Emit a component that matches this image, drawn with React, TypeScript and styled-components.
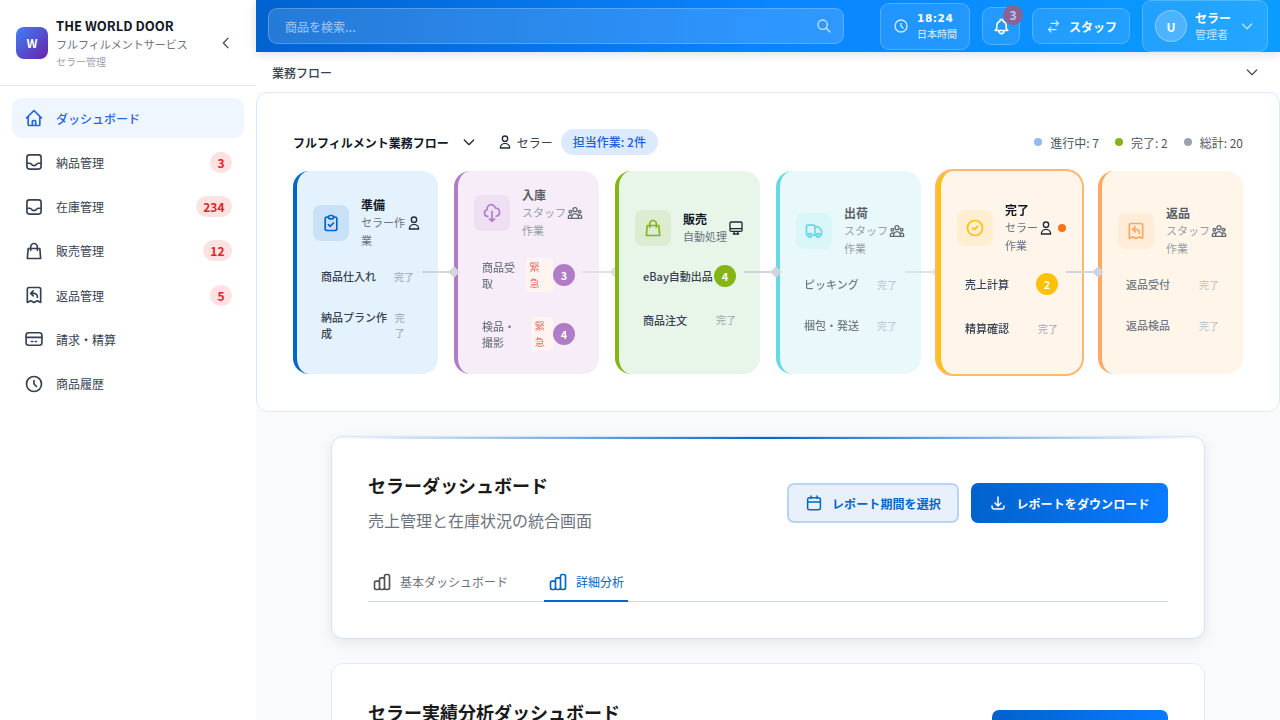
import { ReactNode } from 'react';
import {
  HiOutlineBell,
  HiOutlineChartBar,
  HiOutlineCheckCircle,
  HiOutlineChevronDown,
  HiOutlineChevronLeft,
  HiOutlineClipboardCheck,
  HiOutlineClock,
  HiOutlineCloudDownload,
  HiOutlineDesktopComputer,
  HiOutlineDownload,
  HiOutlineHome,
  HiOutlineReceiptRefund,
  HiOutlineSearch,
  HiOutlineShoppingBag,
  HiOutlineSwitchHorizontal,
  HiOutlineTruck,
  HiOutlineUser,
  HiOutlineUserGroup,
} from 'react-icons/hi';
import styled, { createGlobalStyle } from 'styled-components';

const GlobalStyle = createGlobalStyle`
  * {
    box-sizing: border-box;
  }
  html,
  body {
    margin: 0;
    padding: 0;
    background: #f8fafc;
    font-family: 'Noto Sans CJK JP', 'Noto Sans', sans-serif;
  }
  p,
  h1,
  h2 {
    margin: 0;
  }
`;

const Page = styled.div`
  display: flex;
  width: 1280px;
  height: 720px;
  overflow: hidden;
`;

const Sidebar = styled.aside`
  width: 256px;
  flex-shrink: 0;
  background: #fff;
`;

const Brand = styled.div`
  display: flex;
  align-items: center;
  height: 86px;
  padding: 0 16px;
  gap: 8px;
  border-bottom: 1px solid #e5e7eb;
`;

const Logo = styled.div`
  width: 32px;
  height: 32px;
  border-radius: 8px;
  display: flex;
  align-items: center;
  justify-content: center;
  background: linear-gradient(135deg, #3b82f6, #6b21a8);
  color: #fff;
  font-size: 12px;
  font-weight: 700;
`;

const BrandText = styled.div`
  flex: 1;
  display: flex;
  flex-direction: column;
  h1 {
    font-size: 13px;
    line-height: 20px;
    font-weight: 700;
    color: #111827;
  }
  p {
    font-size: 11px;
    line-height: 16px;
    color: #6b7280;
  }
  span {
    margin-top: 2px;
    font-size: 10px;
    line-height: 16px;
    color: #9ca3af;
  }
`;

const Collapse = styled.div`
  display: flex;
  color: #4b5563;
  margin-right: 6px;
  font-size: 16px;
`;

const Nav = styled.nav`
  display: flex;
  flex-direction: column;
  gap: 4.3px;
  padding: 12px;
`;

const NavItem = styled.div<{ $active?: boolean }>`
  display: flex;
  align-items: center;
  height: 40px;
  padding: 0 12px;
  gap: 12px;
  border-radius: 10px;
  font-size: 12px;
  font-weight: ${(p) => (p.$active ? 500 : 400)};
  color: ${(p) => (p.$active ? '#2563eb' : '#374151')};
  background: ${(p) => (p.$active ? '#eff6ff' : 'transparent')};
  svg {
    width: 20px;
    height: 20px;
    flex-shrink: 0;
    color: ${(p) => (p.$active ? '#2563eb' : '#374151')};
  }
  span {
    flex: 1;
  }
`;

const NavBadge = styled.b`
  min-width: 22px;
  height: 21px;
  padding: 0 7.5px;
  border-radius: 11px;
  background: #fee2e2;
  color: #dc2626;
  font-size: 12px;
  line-height: 21px;
  font-weight: 700;
  text-align: center;
`;

const Main = styled.div`
  flex: 1;
  min-width: 0;
  display: flex;
  flex-direction: column;
`;

const Header = styled.header`
  position: relative;
  z-index: 3;
  display: flex;
  align-items: center;
  height: 52px;
  flex-shrink: 0;
  padding: 0 12px;
  gap: 12px;
  background: linear-gradient(90deg, #0062cf, #0a84ff 50%, #0a9dff);
  box-shadow: 0 2px 10px rgba(15, 23, 42, 0.14);
  color: #fff;
`;

const SearchBox = styled.div`
  display: flex;
  align-items: center;
  justify-content: space-between;
  width: 576px;
  height: 36px;
  margin-right: 24px;
  padding: 0 11px 0 16px;
  border-radius: 9px;
  border: 1px solid rgba(255, 255, 255, 0.22);
  background: rgba(255, 255, 255, 0.15);
  font-size: 12px;
  font-weight: 500;
  color: rgba(255, 255, 255, 0.5);
  svg {
    width: 16px;
    height: 16px;
    color: rgba(255, 255, 255, 0.75);
  }
`;

const Glass = styled.div`
  position: relative;
  display: flex;
  align-items: center;
  border-radius: 9px;
  border: 1px solid rgba(255, 255, 255, 0.22);
  background: rgba(255, 255, 255, 0.1);
`;

const TimeBox = styled(Glass)`
  width: 90px;
  height: 47px;
  padding-left: 12px;
  gap: 8px;
  svg {
    width: 16px;
    height: 16px;
    color: rgba(255, 255, 255, 0.8);
  }
  b {
    display: block;
    font-family: 'DejaVu Sans', sans-serif;
    font-size: 10.5px;
    line-height: 16px;
    font-weight: 700;
    letter-spacing: 0.6px;
  }
  small {
    display: block;
    font-size: 10px;
    line-height: 16px;
    font-weight: 500;
    color: rgba(255, 255, 255, 0.75);
  }
`;

const BellBox = styled(Glass)`
  width: 38px;
  height: 38px;
  justify-content: center;
  svg {
    width: 19px;
    height: 19px;
  }
`;

const BellCount = styled.span`
  position: absolute;
  top: -3px;
  right: -4px;
  width: 20px;
  height: 20px;
  border-radius: 50%;
  background: #8a6396;
  color: #b7c6ea;
  font-size: 12px;
  line-height: 20px;
  font-weight: 700;
  text-align: center;
`;

const StaffBox = styled(Glass)`
  width: 98px;
  height: 36px;
  padding-left: 13px;
  gap: 8px;
  font-size: 12px;
  font-weight: 700;
  svg {
    width: 15px;
    height: 15px;
    color: rgba(255, 255, 255, 0.8);
  }
`;

const UserBox = styled(Glass)`
  width: 126px;
  height: 52px;
  padding-left: 12px;
  gap: 8px;
  > svg {
    width: 16px;
    height: 16px;
    color: rgba(255, 255, 255, 0.7);
  }
`;

const Avatar = styled.div`
  width: 32px;
  height: 32px;
  border-radius: 50%;
  display: flex;
  align-items: center;
  justify-content: center;
  background: rgba(255, 255, 255, 0.2);
  border: 1px solid rgba(255, 255, 255, 0.3);
  font-size: 12px;
  font-weight: 700;
`;

const UserText = styled.div`
  width: 36px;
  b {
    display: block;
    font-size: 12px;
    line-height: 17px;
    font-weight: 700;
  }
  small {
    display: block;
    font-size: 11px;
    line-height: 17px;
    color: rgba(255, 255, 255, 0.72);
  }
`;

const FlowBar = styled.div`
  display: flex;
  align-items: center;
  justify-content: space-between;
  height: 40px;
  flex-shrink: 0;
  padding: 0 20px 0 16px;
  background: #fff;
  font-size: 12px;
  font-weight: 500;
  color: #374151;
  svg {
    width: 16px;
    height: 16px;
    color: #4b5563;
  }
`;

const FlowPanel = styled.section`
  flex-shrink: 0;
  height: 320px;
  padding: 36px;
  background: #fff;
  border: 1px solid #dbeafe;
  border-radius: 12px;
`;

const FlowHead = styled.div`
  display: flex;
  align-items: center;
  justify-content: space-between;
  height: 26px;
  margin-bottom: 16px;
`;

const FlowHeadLeft = styled.div`
  display: flex;
  align-items: center;
  font-size: 12px;
  color: #374151;
  b {
    color: #111827;
    font-weight: 700;
  }
`;

const HeadIcon = styled.span<{ $gap: number }>`
  display: flex;
  margin: 0 ${(p) => p.$gap}px 0 12px;
  color: #1f2937;
  svg {
    width: 16px;
    height: 16px;
  }
`;

const Pill = styled.span`
  height: 26px;
  margin-left: 8px;
  padding: 0 12px;
  border-radius: 13px;
  background: #dbeafe;
  color: #1d5fd8;
  font-weight: 500;
  line-height: 26px;
`;

const Legend = styled.div`
  display: flex;
  gap: 16px;
  font-size: 12px;
  color: #4b5563;
`;

const LegendItem = styled.span<{ $color: string }>`
  display: flex;
  align-items: center;
  gap: 8px;
  &::before {
    content: '';
    width: 8px;
    height: 8px;
    border-radius: 50%;
    background: ${(p) => p.$color};
  }
`;

const Steps = styled.div`
  display: grid;
  grid-template-columns: repeat(6, 145px);
  gap: 16px;
`;

const Step = styled.div<{ $accent: string; $bg: string; $dim?: boolean; $current?: boolean }>`
  position: relative;
  display: flex;
  flex-direction: column;
  justify-content: center;
  height: 203px;
  padding: 16px;
  border-radius: 16px;
  border-left: 4px solid ${(p) => p.$accent};
  background: ${(p) => p.$bg};
  opacity: ${(p) => (p.$dim ? 0.7 : 1)};
  box-shadow: ${(p) => (p.$current ? '0 0 0 2px #ffb870' : 'none')};
`;

const StepHead = styled.div`
  display: flex;
  align-items: center;
  margin-bottom: 11px;
`;

const StepIcon = styled.div<{ $accent: string }>`
  width: 36px;
  height: 36px;
  flex-shrink: 0;
  margin-right: 12px;
  border-radius: 8px;
  display: flex;
  align-items: center;
  justify-content: center;
  background: ${(p) => p.$accent}1e;
  color: ${(p) => p.$accent};
  svg {
    width: 20px;
    height: 20px;
  }
`;

const StepText = styled.div`
  flex: 1;
  min-width: 0;
  b {
    display: block;
    font-size: 12px;
    line-height: 17px;
    font-weight: 700;
    color: #111827;
  }
  small {
    display: block;
    font-size: 11px;
    line-height: 18px;
    color: #6b7280;
  }
`;

const Role = styled.div`
  display: flex;
  align-items: center;
  flex-shrink: 0;
  gap: 4px;
  color: #1f2937;
  svg {
    width: 16px;
    height: 16px;
  }
`;

const LiveDot = styled.i`
  width: 8px;
  height: 8px;
  border-radius: 50%;
  background: #f97316;
`;

const Tasks = styled.div`
  display: flex;
  flex-direction: column;
  gap: 9px;
`;

const Task = styled.div`
  display: flex;
  align-items: center;
  justify-content: space-between;
  padding: 8px;
`;

const TaskName = styled.span`
  font-size: 11px;
  line-height: 16px;
  font-weight: 500;
  color: #374151;
`;

const Done = styled.span`
  font-size: 10px;
  line-height: 15px;
  color: #9ca3af;
`;

const TaskSide = styled.div`
  display: flex;
  align-items: center;
`;

const Urgent = styled.span`
  padding: 1px 4px;
  border-radius: 4px;
  background: #fff0ea;
  color: #dc2626;
  font-size: 10px;
  line-height: 16px;
`;

const Count = styled.span<{ $accent: string }>`
  width: 22px;
  height: 22px;
  flex-shrink: 0;
  border-radius: 50%;
  background: ${(p) => p.$accent};
  color: #fff;
  font-size: 11px;
  line-height: 22px;
  font-weight: 700;
  text-align: center;
`;

const Connector = styled.div`
  position: absolute;
  z-index: 2;
  top: 100px;
  right: -16px;
  width: 32px;
  height: 2px;
  background: #d1d5db;
  &::after {
    content: '';
    position: absolute;
    top: -3px;
    right: -4px;
    width: 8px;
    height: 8px;
    background: #d1d5db;
    transform: rotate(45deg);
  }
`;

const Content = styled.div`
  display: flex;
  flex-direction: column;
  flex-shrink: 0;
  gap: 24px;
  padding: 24px 75px;
`;

const Card = styled.section<{ $bar?: boolean }>`
  position: relative;
  padding: 36px;
  background: #fff;
  border: 1px solid ${(p) => (p.$bar ? '#d4e4f7' : '#e2ebf8')};
  border-radius: 12px;
  overflow: hidden;
  box-shadow: ${(p) => (p.$bar ? '0 4px 14px rgba(15, 23, 42, 0.08)' : 'none')};
  &::before {
    content: '';
    display: ${(p) => (p.$bar ? 'block' : 'none')};
    position: absolute;
    top: 0;
    left: 0;
    right: 0;
    height: 2px;
    background: linear-gradient(90deg, transparent, #0066cc, transparent);
  }
`;

const CardHead = styled.div`
  display: flex;
  align-items: center;
  justify-content: space-between;
  min-height: 60px;
`;

const CardTitles = styled.div`
  align-self: flex-start;
  h2 {
    font-size: 18px;
    line-height: 24px;
    font-weight: 700;
    color: #1a1a1a;
  }
  p {
    margin: 11px 0 1px;
    font-size: 16px;
    line-height: 24px;
    color: #6b7280;
  }
`;

const Actions = styled.div`
  display: flex;
  gap: 12px;
`;

const Button = styled.div<{ $primary?: boolean }>`
  display: flex;
  align-items: center;
  gap: 9px;
  height: 40px;
  padding: 0 ${(p) => (p.$primary ? 16.5 : 16)}px;
  border-radius: 7px;
  border: 2px solid ${(p) => (p.$primary ? 'transparent' : '#b9d4f1')};
  background: ${(p) => (p.$primary ? 'linear-gradient(90deg, #0062cc, #0a7bff) border-box' : '#e8f1fb')};
  color: ${(p) => (p.$primary ? '#fff' : '#0066cc')};
  font-size: 12px;
  font-weight: 700;
  letter-spacing: 0.1px;
  svg {
    width: 18px;
    height: 18px;
  }
`;

const ExportButton = styled(Button)`
  width: 176px;
`;

const Tabs = styled.div`
  display: flex;
  gap: 32px;
  margin-top: 28px;
  border-bottom: 1px solid #c5d9f0;
`;

const Tab = styled.div<{ $active?: boolean }>`
  display: flex;
  align-items: center;
  gap: 8px;
  height: 41px;
  margin-bottom: -1px;
  padding: 2px 4px 0;
  border-bottom: 2px solid ${(p) => (p.$active ? '#0066cc' : 'transparent')};
  color: ${(p) => (p.$active ? '#0066cc' : '#6b7280')};
  font-size: 12px;
  svg {
    width: 20px;
    height: 20px;
    color: ${(p) => (p.$active ? '#0066cc' : '#525252')};
  }
`;

const InboxIcon = () => (
  <svg viewBox="0 0 24 24" fill="none" stroke="currentColor" strokeWidth="2" strokeLinecap="round" strokeLinejoin="round">
    <rect x="3.5" y="3.5" width="17" height="17" rx="3" />
    <path d="M3.5 13.5h3.2c1 0 1.6.5 2.2 1.3.7 1 1.7 1.5 3.1 1.5s2.4-.5 3.1-1.5c.6-.8 1.2-1.3 2.2-1.3h3.2" />
  </svg>
);

const BillIcon = () => (
  <svg viewBox="0 0 24 24" fill="none" stroke="currentColor" strokeWidth="2" strokeLinecap="round">
    <rect x="2.5" y="4.5" width="19" height="15" rx="3" />
    <path d="M2.5 10h19M9 15h1.5M13.5 15H15" />
  </svg>
);

const CalendarIcon = () => (
  <svg viewBox="0 0 24 24" fill="none" stroke="currentColor" strokeWidth="2" strokeLinecap="round">
    <rect x="3.5" y="5" width="17" height="16" rx="2.5" />
    <path d="M8 2.5V6M16 2.5V6M3.5 10.5h17" />
  </svg>
);

interface TaskData {
  name: string;
  urgent?: boolean;
  count?: number;
}

interface StepData {
  title: string;
  role: string;
  accent: string;
  bg: string;
  icon: ReactNode;
  roleIcon: ReactNode;
  dim?: boolean;
  current?: boolean;
  tasks: TaskData[];
}

const steps: StepData[] = [
  {
    title: '準備',
    role: 'セラー作業',
    accent: '#0066cc',
    bg: '#e3f2fd',
    icon: <HiOutlineClipboardCheck />,
    roleIcon: <HiOutlineUser />,
    tasks: [{ name: '商品仕入れ' }, { name: '納品プラン作成' }],
  },
  {
    title: '入庫',
    role: 'スタッフ作業',
    accent: '#8e44ad',
    bg: '#f3e5f5',
    icon: <HiOutlineCloudDownload />,
    roleIcon: <HiOutlineUserGroup />,
    dim: true,
    tasks: [
      { name: '商品受取', urgent: true, count: 3 },
      // word joiner keeps 撮影 together on the second line
      { name: '検品・撮\u2060影', urgent: true, count: 4 },
    ],
  },
  {
    title: '販売',
    role: '自動処理',
    accent: '#84b512',
    bg: '#e8f5e9',
    icon: <HiOutlineShoppingBag />,
    roleIcon: <HiOutlineDesktopComputer />,
    tasks: [{ name: 'eBay自動出品', count: 4 }, { name: '商品注文' }],
  },
  {
    title: '出荷',
    role: 'スタッフ作業',
    accent: '#22c9de',
    bg: '#e0f7fa',
    icon: <HiOutlineTruck />,
    roleIcon: <HiOutlineUserGroup />,
    dim: true,
    tasks: [{ name: 'ピッキング' }, { name: '梱包・発送' }],
  },
  {
    title: '完了',
    role: 'セラー作業',
    accent: '#ffc107',
    bg: '#fff5eb',
    icon: <HiOutlineCheckCircle />,
    roleIcon: <HiOutlineUser />,
    current: true,
    tasks: [{ name: '売上計算', count: 2 }, { name: '精算確認' }],
  },
  {
    title: '返品',
    role: 'スタッフ作業',
    accent: '#ff8324',
    bg: '#fff3e0',
    icon: <HiOutlineReceiptRefund />,
    roleIcon: <HiOutlineUserGroup />,
    dim: true,
    tasks: [{ name: '返品受付' }, { name: '返品検品' }],
  },
];

const navItems = [
  { label: 'ダッシュボード', icon: <HiOutlineHome />, active: true },
  { label: '納品管理', icon: <InboxIcon />, badge: 3 },
  { label: '在庫管理', icon: <InboxIcon />, badge: 234 },
  { label: '販売管理', icon: <HiOutlineShoppingBag />, badge: 12 },
  { label: '返品管理', icon: <HiOutlineReceiptRefund />, badge: 5 },
  { label: '請求・精算', icon: <BillIcon /> },
  { label: '商品履歴', icon: <HiOutlineClock /> },
];

const App = () => {
  return (
    <Page>
      <GlobalStyle />
      <Sidebar>
        <Brand>
          <Logo>W</Logo>
          <BrandText>
            <h1>THE WORLD DOOR</h1>
            <p>フルフィルメントサービス</p>
            <span>セラー管理</span>
          </BrandText>
          <Collapse>
            <HiOutlineChevronLeft />
          </Collapse>
        </Brand>
        <Nav>
          {navItems.map((item) => (
            <NavItem key={item.label} $active={item.active}>
              {item.icon}
              <span>{item.label}</span>
              {item.badge !== undefined && <NavBadge>{item.badge}</NavBadge>}
            </NavItem>
          ))}
        </Nav>
      </Sidebar>
      <Main>
        <Header>
          <SearchBox>
            商品を検索...
            <HiOutlineSearch />
          </SearchBox>
          <TimeBox>
            <HiOutlineClock />
            <div>
              <b>18:24</b>
              <small>日本時間</small>
            </div>
          </TimeBox>
          <BellBox>
            <HiOutlineBell />
            <BellCount>3</BellCount>
          </BellBox>
          <StaffBox>
            <HiOutlineSwitchHorizontal />
            スタッフ
          </StaffBox>
          <UserBox>
            <Avatar>U</Avatar>
            <UserText>
              <b>セラー</b>
              <small>管理者</small>
            </UserText>
            <HiOutlineChevronDown />
          </UserBox>
        </Header>
        <FlowBar>
          業務フロー
          <HiOutlineChevronDown />
        </FlowBar>
        <FlowPanel>
          <FlowHead>
            <FlowHeadLeft>
              <b>フルフィルメント業務フロー</b>
              <HeadIcon $gap={8}>
                <HiOutlineChevronDown />
              </HeadIcon>
              <HeadIcon $gap={4}>
                <HiOutlineUser />
              </HeadIcon>
              セラー
              <Pill>担当作業: 2件</Pill>
            </FlowHeadLeft>
            <Legend>
              <LegendItem $color="#93b9f5">進行中: 7</LegendItem>
              <LegendItem $color="#84b512">完了: 2</LegendItem>
              <LegendItem $color="#9ca3af">総計: 20</LegendItem>
            </Legend>
          </FlowHead>
          <Steps>
            {steps.map((step, index) => (
              <Step key={step.title} $accent={step.accent} $bg={step.bg} $dim={step.dim} $current={step.current}>
                <StepHead>
                  <StepIcon $accent={step.accent}>{step.icon}</StepIcon>
                  <StepText>
                    <b>{step.title}</b>
                    <small>{step.role}</small>
                  </StepText>
                  <Role>
                    {step.roleIcon}
                    {step.current && <LiveDot />}
                  </Role>
                </StepHead>
                <Tasks>
                  {step.tasks.map((task) => (
                    <Task key={task.name}>
                      <TaskName>{task.name}</TaskName>
                      {task.count ? (
                        <TaskSide>
                          {task.urgent && <Urgent>緊急</Urgent>}
                          <Count $accent={step.accent}>{task.count}</Count>
                        </TaskSide>
                      ) : (
                        <Done>完了</Done>
                      )}
                    </Task>
                  ))}
                </Tasks>
                {index < steps.length - 1 && <Connector />}
              </Step>
            ))}
          </Steps>
        </FlowPanel>
        <Content>
          <Card $bar>
            <CardHead>
              <CardTitles>
                <h2>セラーダッシュボード</h2>
                <p>売上管理と在庫状況の統合画面</p>
              </CardTitles>
              <Actions>
                <Button>
                  <CalendarIcon />
                  レポート期間を選択
                </Button>
                <Button $primary>
                  <HiOutlineDownload />
                  レポートをダウンロード
                </Button>
              </Actions>
            </CardHead>
            <Tabs>
              <Tab>
                <HiOutlineChartBar />
                基本ダッシュボード
              </Tab>
              <Tab $active>
                <HiOutlineChartBar />
                詳細分析
              </Tab>
            </Tabs>
          </Card>
          <Card>
            <CardHead>
              <CardTitles>
                <h2>セラー実績分析ダッシュボード</h2>
              </CardTitles>
              <ExportButton $primary />
            </CardHead>
          </Card>
        </Content>
      </Main>
    </Page>
  );
};

export default App;
